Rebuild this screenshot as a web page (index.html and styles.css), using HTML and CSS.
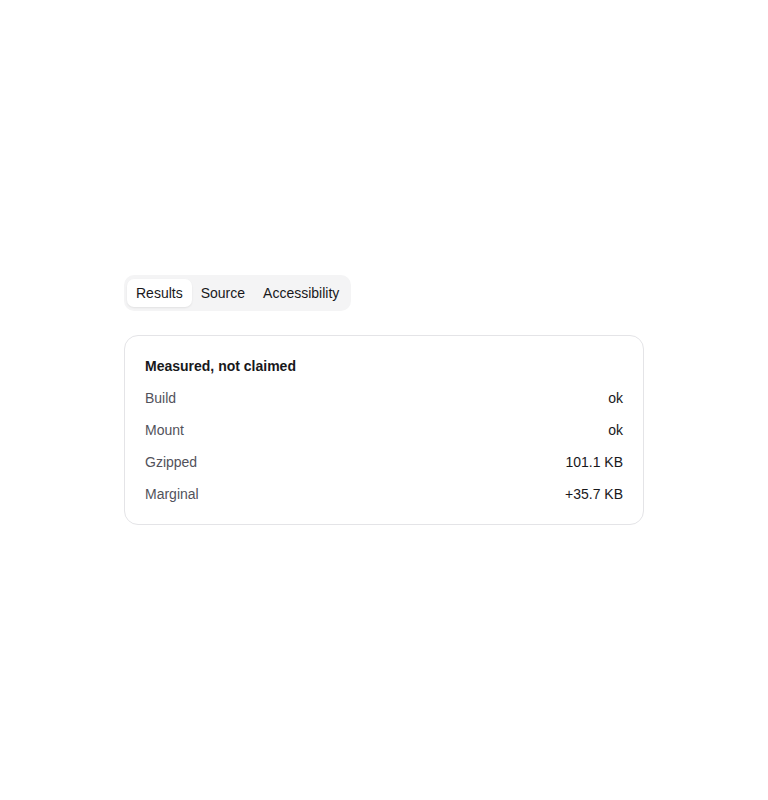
FILE: index.html
```html
<!DOCTYPE html>
<html lang="en">
<head>
<meta charset="utf-8">
<title>Measured, not claimed</title>
<link rel="stylesheet" href="styles.css">
</head>
<body>
<main class="page">
  <div class="panel">
    <nav class="tabs" role="tablist">
      <button class="tab active" role="tab">Results</button>
      <button class="tab" role="tab">Source</button>
      <button class="tab" role="tab">Accessibility</button>
    </nav>
    <section class="card">
      <h2 class="card-title">Measured, not claimed</h2>
      <dl class="rows">
        <div class="row"><dt>Build</dt><dd>ok</dd></div>
        <div class="row"><dt>Mount</dt><dd>ok</dd></div>
        <div class="row"><dt>Gzipped</dt><dd>101.1 KB</dd></div>
        <div class="row"><dt>Marginal</dt><dd>+35.7 KB</dd></div>
      </dl>
    </section>
  </div>
</main>
</body>
</html>
```
FILE: styles.css
```css
* { box-sizing: border-box; }
html, body { margin: 0; padding: 0; background: #ffffff; }
body {
  font-family: "Liberation Sans", Arial, sans-serif;
  font-size: 14px;
  line-height: 20px;
  color: #18181b;
}
.page {
  min-height: 800px;
  display: flex;
  align-items: center;
  justify-content: center;
}
.panel {
  width: 520px;
  display: flex;
  flex-direction: column;
  align-items: flex-start;
  gap: 24px;
}
.tabs {
  display: flex;
  background: #f4f4f5;
  border-radius: 10px;
  padding: 4px 3px;
}
.tab {
  font: inherit;
  line-height: 20px;
  color: #18181b;
  background: transparent;
  border: 0;
  padding: 4px 9px;
  border-radius: 7px;
  cursor: pointer;
}
.tab.active {
  background: #ffffff;
  box-shadow: 0 1px 2px rgba(0, 0, 0, 0.08);
}
.card {
  width: 100%;
  border: 1px solid #e4e4e7;
  border-radius: 14px;
  padding: 20px;
  display: flex;
  flex-direction: column;
  gap: 12px;
}
.card-title {
  margin: 0;
  font-size: 14px;
  line-height: 20px;
  font-weight: 700;
  color: #18181b;
}
.rows {
  margin: 0;
  display: flex;
  flex-direction: column;
  gap: 12px;
}
.row {
  display: flex;
  justify-content: space-between;
}
.row dt { color: #52525b; }
.row dd { margin: 0; color: #18181b; }
```
